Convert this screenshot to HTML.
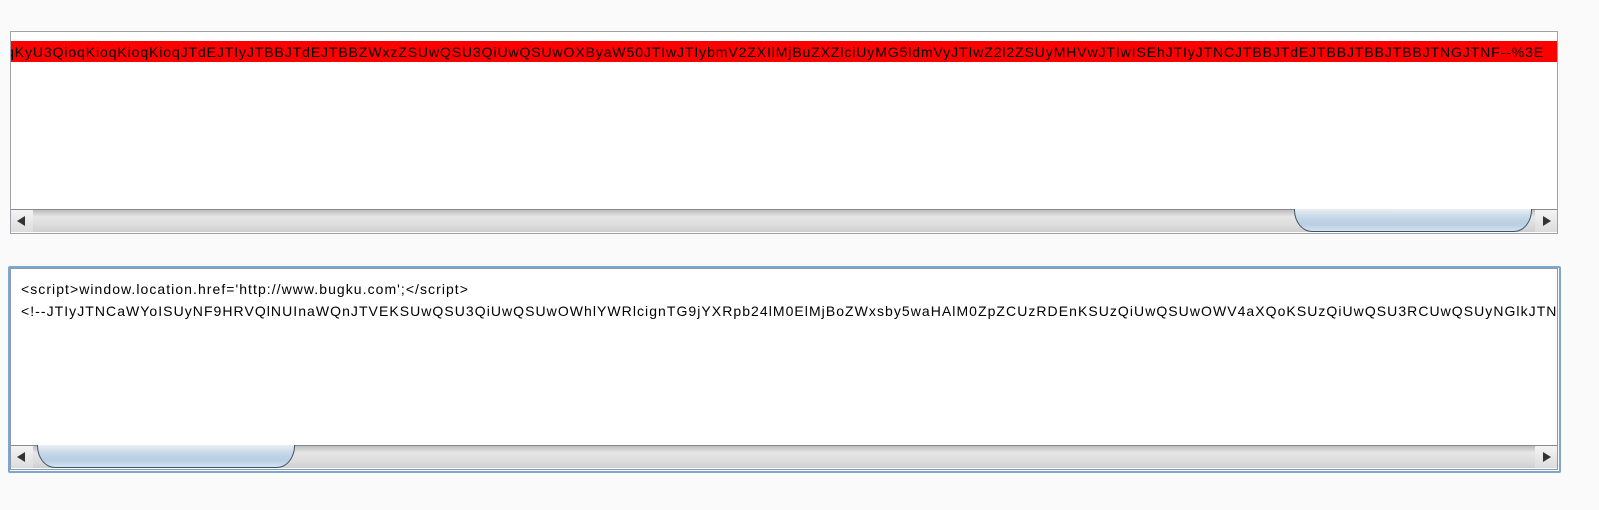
<!DOCTYPE html>
<html><head><meta charset="utf-8"><style>
html,body{margin:0;padding:0;background:#fafafa;width:1599px;height:510px;overflow:hidden;font-family:"Liberation Sans",Arial,sans-serif;}
.pane{position:absolute;background:#fff;overflow:hidden;}
.txt{position:absolute;white-space:nowrap;font-size:14px;color:#000;}
.sb{position:absolute;height:22px;background:linear-gradient(#bdbdbd,#e6e6e6 30%,#dcdcdc 70%,#cfcfcf);border-top:1px solid #8a8a8a;}
.btn{position:absolute;top:0;width:22px;height:22px;background:linear-gradient(#f4f4f4,#dcdcdc);}
.thumb{position:absolute;top:-1px;height:23px;border:1px solid #3d5468;border-top:none;border-radius:0 0 18px 18px/0 0 22px 22px;background:linear-gradient(#e8eef4,#c4d6e6 40%,#b8cee2 70%,#d4e2ee);box-sizing:border-box;}
.arr{position:absolute;top:6px;width:0;height:0;border-top:5px solid transparent;border-bottom:5px solid transparent;}
</style></head><body>
<div class="pane" style="left:10px;top:31px;width:1546px;height:201px;border:1px solid #a0a0a8;">
  <div style="position:absolute;left:0;top:9px;width:1546px;height:21px;background:#ff0000;"></div>
  <div class="txt" style="right:13px;top:10px;line-height:20px;letter-spacing:0.9px;">lvKioqKyU3QioqKioqKioqKioqJTdEJTIyJTBBJTdEJTBBZWxzZSUwQSU3QiUwQSUwOXByaW50JTIwJTIybmV2ZXIlMjBuZXZlciUyMG5ldmVyJTIwZ2l2ZSUyMHVwJTIwISEhJTIyJTNCJTBBJTdEJTBBJTBBJTBBJTNGJTNF--%3E</div>
  <div class="sb" style="left:0;top:177px;width:1546px;">
    <div class="btn" style="left:0;"><div class="arr" style="left:6px;border-right:8px solid #333;"></div></div>
    <div class="btn" style="right:0;"><div class="arr" style="left:8px;border-left:8px solid #333;"></div></div>
    <div class="thumb" style="left:1283px;width:238px;"></div>
  </div>
</div>
<div style="position:absolute;left:8px;top:266px;width:1549px;height:203px;border:2px solid #7fa6cc;border-radius:2px;"></div>
<div class="pane" style="left:10px;top:268px;width:1546px;height:200px;border:1px solid #8a9aae;">
  <div class="txt" style="left:10px;top:9px;line-height:22px;letter-spacing:1.05px;">&lt;script&gt;window.location.href='http://www.bugku.com';&lt;/script&gt;<br>&lt;!--JTIyJTNCaWYoISUyNF9HRVQlNUInaWQnJTVEKSUwQSU3QiUwQSUwOWhlYWRlcignTG9jYXRpb24lM0ElMjBoZWxsby5waHAlM0ZpZCUzRDEnKSUzQiUwQSUwOWV4aXQoKSUzQiUwQSU3RCUwQSUyNGlkJTNEJTI0X0dFVCU1QidpZCclNUQlM0IlMEElMjRhJTNEJTI0X0dFVCU1QidhJyU1RCUzQiUwQSUyNGIlM0QlMjRfR0VUJTVCJ2InJTVE</div>
  <div class="sb" style="left:0;top:176px;width:1546px;">
    <div class="btn" style="left:0;"><div class="arr" style="left:6px;border-right:8px solid #333;"></div></div>
    <div class="btn" style="right:0;"><div class="arr" style="left:8px;border-left:8px solid #333;"></div></div>
    <div class="thumb" style="left:26px;width:258px;"></div>
  </div>
</div>
</body></html>
